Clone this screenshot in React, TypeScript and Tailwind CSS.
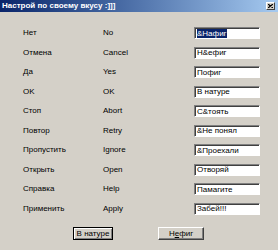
const rows: [string, string, string][] = [
  ['Нет', 'No', '&Нафиг'],
  ['Отмена', 'Cancel', 'Н&ефиг'],
  ['Да', 'Yes', 'Пофиг'],
  ['OK', 'OK', 'В натуре'],
  ['Стоп', 'Abort', 'С&тоять'],
  ['Повтор', 'Retry', '&Не понял'],
  ['Пропустить', 'Ignore', '&Проехали'],
  ['Открыть', 'Open', 'Отворяй'],
  ['Справка', 'Help', 'Памагите'],
  ['Применить', 'Apply', 'Забей!!!'],
];

function Edit({ value, selected }: { value: string; selected?: boolean }) {
  return (
    <div className="w-[66px] h-[12px] bg-white border-t border-l border-t-[#808080] border-l-[#808080] border-b border-r border-b-white border-r-white shadow-[inset_1px_1px_0_#404040] flex items-center pl-[2px] overflow-hidden">
      {selected ? (
        <span className="bg-[#0a246a] text-white leading-[9px]">{value}</span>
      ) : (
        <span className="leading-[9px]">{value}</span>
      )}
    </div>
  );
}

export default function App() {
  return (
    <div className="w-[278px] h-[250px] bg-[#d4d0c8] flex flex-col text-black text-[8px] font-['Liberation_Sans',Arial,sans-serif] overflow-hidden">
      <div className="h-[12px] bg-gradient-to-r from-[#0a246a] to-[#a6caf0] flex items-center justify-between pl-[2px] pr-[3px]">
        <span className="text-white font-bold text-[8px] leading-none">Настрой по своему вкусу :]]]</span>
        <div className="w-[9px] h-[8px] bg-[#d4d0c8] border-t border-l border-t-white border-l-white border-b border-r border-b-[#404040] border-r-[#404040] flex items-center justify-center">
          <svg width="5" height="4" viewBox="0 0 5 4">
            <path d="M0 0L5 4M5 0L0 4" stroke="#000" strokeWidth="1.2" />
          </svg>
        </div>
      </div>

      <div className="flex flex-col pt-[15px]">
        {rows.map(([ru, en, val], i) => (
          <div key={i} className="h-[19.5px] flex items-start">
            <div className="w-[23px]" />
            <div className="w-[80px] h-[12px] flex items-center">{ru}</div>
            <div className="w-[91px] h-[12px] flex items-center">{en}</div>
            <Edit value={val} selected={i === 0} />
          </div>
        ))}
      </div>

      <div className="flex pt-[5px]">
        <div className="w-[73px]" />
        <button className="w-[40px] h-[13px] bg-[#d4d0c8] border border-black shadow-[inset_1px_1px_0_#fff,inset_-1px_-1px_0_#808080] text-[8px] leading-none flex items-center justify-center">
          В натуре
        </button>
        <div className="w-[45px]" />
        <button className="w-[46px] h-[13px] bg-[#d4d0c8] border-t border-l border-t-white border-l-white border-b border-r border-b-[#404040] border-r-[#404040] shadow-[inset_-1px_-1px_0_#808080] text-[8px] leading-none flex items-center justify-center">
          Н<span className="underline">е</span>фиг
        </button>
      </div>
    </div>
  );
}
